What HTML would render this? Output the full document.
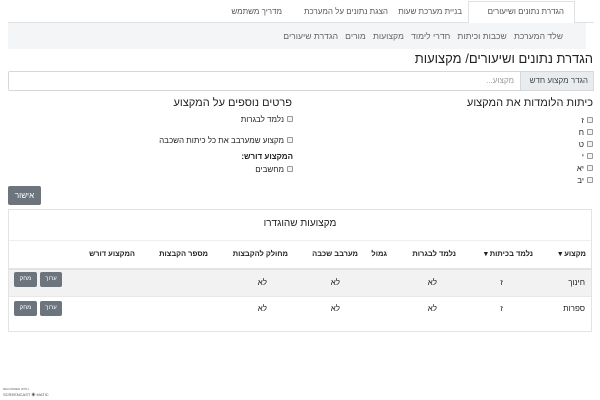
<!DOCTYPE html>
<html><head><meta charset="utf-8"><style>
*{box-sizing:border-box;margin:0;padding:0}
body{width:600px;height:400px;background:#fff;font-family:"Liberation Sans","Noto Sans CJK SC",sans-serif;color:#222;position:relative;overflow:hidden;font-size:8px}
.a{position:absolute;white-space:nowrap;direction:rtl}
.cb{position:absolute;width:6px;height:6px;border:1px solid #999;border-radius:1px;background:#f4f4f4}
.btn{position:absolute;background:#6c757d;color:#fff;border-radius:2px;text-align:center;font-size:6px}
</style></head><body>
<div style="position:absolute;left:8px;top:22px;width:586px;height:1px;background:#dee2e6"></div>
<div style="position:absolute;left:468px;top:1px;width:107px;height:22px;border:1px solid #dee2e6;border-bottom:none;background:#fff"></div>
<div class="a" style="right:36px;top:7px;color:#555;font-size:8px">הגדרת נתונים ושיעורים</div>
<div class="a" style="right:138px;top:7px;color:#555">בניית מערכת שעות</div>
<div class="a" style="right:212px;top:7px;color:#555">הצגת נתונים על המערכת</div>
<div class="a" style="right:318px;top:7px;color:#555">מדריך משתמש</div>
<div style="position:absolute;left:8px;top:23px;width:578px;height:26px;background:#f3f5f7"></div>
<div class="a" style="right:37px;top:31px;color:#666;font-size:8.6px">שלד המערכת&nbsp;&nbsp; שכבות וכיתות&nbsp;&nbsp; חדרי לימוד&nbsp;&nbsp; מקצועות&nbsp;&nbsp; מורים&nbsp;&nbsp; הגדרת שיעורים</div>
<div class="a" style="right:7px;top:51px;font-size:13px;color:#222">הגדרת נתונים ושיעורים/ מקצועות</div>
<div style="position:absolute;left:8px;top:71px;width:586px;height:20px;border:1px solid #d6d9dc;border-radius:2px"></div>
<div style="position:absolute;left:520px;top:71px;width:74px;height:20px;background:#e9ecef;border:1px solid #d6d9dc"></div>
<div class="a" style="right:12px;top:76px;color:#444">הגדר מקצוע חדש</div>
<div class="a" style="right:86px;top:76px;color:#999">מקצוע...</div>
<div class="a" style="right:7px;top:97px;font-size:11px">כיתות הלומדות את המקצוע</div>
<div class="a" style="right:308px;top:97px;font-size:11px">פרטים נוספים על המקצוע</div>
<div class="cb" style="left:587px;top:117px"></div><div class="a" style="right:16px;top:116px">ז</div>
<div class="cb" style="left:587px;top:129px"></div><div class="a" style="right:16px;top:128px">ח</div>
<div class="cb" style="left:587px;top:141px"></div><div class="a" style="right:16px;top:140px">ט</div>
<div class="cb" style="left:587px;top:153px"></div><div class="a" style="right:16px;top:152px">י</div>
<div class="cb" style="left:587px;top:165px"></div><div class="a" style="right:16px;top:164px">יא</div>
<div class="cb" style="left:587px;top:177px"></div><div class="a" style="right:16px;top:176px">יב</div>
<div class="cb" style="left:287px;top:116px"></div><div class="a" style="right:316px;top:115px">נלמד לבגרות</div>
<div class="cb" style="left:287px;top:137px"></div><div class="a" style="right:316px;top:136px">מקצוע שמערבב את כל כיתות השכבה</div>
<div class="a" style="right:307px;top:152px;font-weight:bold">המקצוע דורש:</div>
<div class="cb" style="left:287px;top:166px"></div><div class="a" style="right:316px;top:165px">מחשבים</div>
<div class="btn" style="left:8px;top:186px;width:33px;height:19px;line-height:19px;font-size:8px">אישור</div>
<div style="position:absolute;left:8px;top:209px;width:584px;height:123px;border:1px solid #e3e3e3"></div>
<div class="a" style="left:0;width:600px;text-align:center;top:218px;font-size:10px">מקצועות שהוגדרו</div>
<div style="position:absolute;left:9px;top:240px;width:582px;height:1px;background:#eee"></div>
<div style="position:absolute;left:9px;top:268px;width:582px;height:2px;background:#e3e3e3"></div>
<div style="position:absolute;left:9px;top:270px;width:582px;height:26px;background:#f2f2f2"></div>
<div style="position:absolute;left:9px;top:296px;width:582px;height:1px;background:#e8e8e8"></div>
<div class="a" style="right:14px;top:249px;font-weight:bold;font-size:7.5px">מקצוע ▾</div>
<div class="a" style="right:67px;top:249px;font-weight:bold;font-size:7.5px">נלמד בכיתות ▾</div>
<div class="a" style="right:144px;top:249px;font-weight:bold;font-size:7.5px">נלמד לבגרות</div>
<div class="a" style="right:213px;top:249px;font-weight:bold;font-size:7.5px">גמול</div>
<div class="a" style="right:242px;top:249px;font-weight:bold;font-size:7.5px">מערבב שכבה</div>
<div class="a" style="right:312px;top:249px;font-weight:bold;font-size:7.5px">מחולק להקבצות</div>
<div class="a" style="right:392px;top:249px;font-weight:bold;font-size:7.5px">מספר הקבצות</div>
<div class="a" style="right:465px;top:249px;font-weight:bold;font-size:7.5px">המקצוע דורש</div>
<div class="a" style="right:15px;top:278px">חינוך</div>
<div class="a" style="right:97px;top:278px">ז</div>
<div class="a" style="right:163px;top:278px">לא</div>
<div class="a" style="right:260px;top:278px">לא</div>
<div class="a" style="right:333px;top:278px">לא</div>
<div class="btn" style="left:40px;top:272px;width:22px;height:15px;line-height:15px">ערוך</div>
<div class="btn" style="left:14px;top:272px;width:23px;height:15px;line-height:15px">מחק</div>
<div class="a" style="right:15px;top:304px">ספרות</div>
<div class="a" style="right:97px;top:304px">ז</div>
<div class="a" style="right:163px;top:304px">לא</div>
<div class="a" style="right:260px;top:304px">לא</div>
<div class="a" style="right:333px;top:304px">לא</div>
<div class="btn" style="left:40px;top:301px;width:22px;height:15px;line-height:15px">ערוך</div>
<div class="btn" style="left:14px;top:301px;width:23px;height:15px;line-height:15px">מחק</div>
<div style="position:absolute;left:3px;top:387px;font-size:3px;color:#666">RECORDED WITH</div>
<div style="position:absolute;left:3px;top:392px;font-size:4px;color:#555">SCREENCAST ◉ MATIC</div>
</body></html>
